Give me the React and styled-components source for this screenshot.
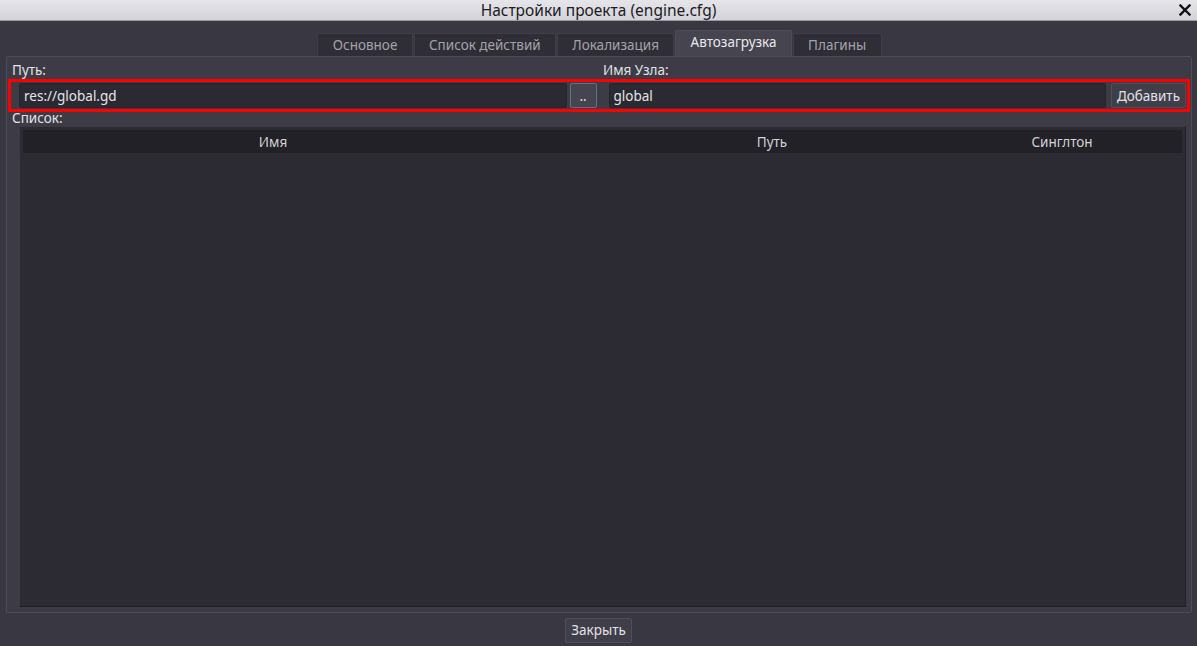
import React from 'react';
import styled, { createGlobalStyle } from 'styled-components';

const GlobalStyle = createGlobalStyle`
	html, body {
		margin: 0;
		padding: 0;
		background: #35343d;
	}
	body {
		font-family: 'Noto Sans', 'Open Sans', sans-serif;
		font-size: 13.5px;
		color: #dcdce0;
	}
`;

const tabs = ['Основное', 'Список действий', 'Локализация', 'Автозагрузка', 'Плагины'];

const columns = [
	{ title: 'Имя', width: '500px' },
	{ title: 'Путь', width: '498px' },
	{ title: 'Синглтон', width: '82px' },
];

const App = () => {
	return (
		<Window>
			<GlobalStyle />
			<TitleBar>
				<TitleText>Настройки проекта (engine.cfg)</TitleText>
				<CloseButton>
					<svg width="12" height="12" viewBox="0 0 12 12">
						<path d="M1.5 1.5 L10.5 10.5 M10.5 1.5 L1.5 10.5" stroke="#111" strokeWidth="2.4" strokeLinecap="square" />
					</svg>
				</CloseButton>
			</TitleBar>
			<Body>
				<TabBar>
					{tabs.map((t) => (
						<Tab key={t} active={t === 'Автозагрузка'}>
							{t}
						</Tab>
					))}
				</TabBar>
				<Panel>
					<LabelRow>
						<Label>Путь:</Label>
						<Label>Имя Узла:</Label>
					</LabelRow>
					<Highlight>
						<FieldGroup>
							<Input defaultValue="res://global.gd" />
							<Button focused narrow>..</Button>
						</FieldGroup>
						<FieldGroup wide>
							<Input defaultValue="global" />
							<Button>Добавить</Button>
						</FieldGroup>
					</Highlight>
					<Label tight>Список:</Label>
					<Tree>
						<TreeHeader>
							{columns.map((c) => (
								<HeaderCell key={c.title} style={{ width: c.width }}>
									{c.title}
								</HeaderCell>
							))}
						</TreeHeader>
					</Tree>
				</Panel>
				<Footer>
					<Button>Закрыть</Button>
				</Footer>
			</Body>
		</Window>
	);
};

export default App;

const Window = styled.div`
	width: 1197px;
	height: 646px;
	display: flex;
	flex-direction: column;
	overflow: hidden;
`;

const TitleBar = styled.div`
	height: 21px;
	flex: none;
	display: flex;
	align-items: center;
	justify-content: center;
	position: relative;
	background: linear-gradient(#e6e5ea, #d4d3da);
	border-bottom: 1px solid #9c9ba4;
	box-sizing: border-box;
`;

const TitleText = styled.span`
	font-size: 15.5px;
	color: #1c1c1f;
	line-height: 21px;
	margin-top: 1px;
`;

const CloseButton = styled.span`
	position: absolute;
	right: 6px;
	top: 4px;
	display: flex;
`;

const Body = styled.div`
	flex: 1;
	display: flex;
	flex-direction: column;
	padding: 0 5px;
	background: #393842;
`;

const TabBar = styled.div`
	height: 35px;
	display: flex;
	align-items: flex-end;
	justify-content: center;
	gap: 1px;
	flex: none;
	padding-left: 2px;
`;

const Tab = styled.div`
	height: ${({ active }) => (active ? '26px' : '23px')};
	box-sizing: border-box;
	padding: 0 14.3px;
	display: flex;
	align-items: center;
	font-size: 13.5px;
	color: ${({ active }) => (active ? '#e8e8ec' : '#a3a2ab')};
	background: ${({ active }) => (active ? '#45444f' : '#2f2e36')};
	border: 1px solid ${({ active }) => (active ? '#4c4b56' : '#3f3e48')};
	border-bottom: none;
	border-radius: 2px 2px 0 0;
	padding-bottom: ${({ active }) => (active ? '3px' : '0')};
`;

const Panel = styled.div`
	height: 557px;
	box-sizing: border-box;
	margin: 0 0 0 1px;
	border: 1px solid #4d4c58;
	border-radius: 2px;
	background: #3d3c46;
	display: flex;
	flex-direction: column;
	padding: 5px 1px 5px 1px;
`;

const LabelRow = styled.div`
	display: grid;
	grid-template-columns: 1fr 1fr;
`;

const Label = styled.div`
	font-size: 13.5px;
	color: #e2e2e6;
	line-height: 17px;
	height: ${({ tight }) => (tight ? '16px' : '17px')};
	margin-top: ${({ tight }) => (tight ? '-2px' : '0')};
	padding-left: 4px;
	position: relative;
`;

const Highlight = styled.div`
	border: 3px solid #ff0000;
	padding: 1px 1px 1px 8px;
	display: grid;
	grid-template-columns: 1fr 1fr;
	column-gap: 12px;
	box-sizing: border-box;
	height: 33px;
`;

const FieldGroup = styled.div`
	display: flex;
	gap: ${({ wide }) => (wide ? '5px' : '3px')};
	height: 25px;
`;

const Input = styled.input`
	flex: 1;
	min-width: 0;
	height: 25px;
	box-sizing: border-box;
	background: #2b2a32;
	border: 1px solid #26252c;
	border-radius: 2px;
	color: #e4e4e8;
	font-family: 'Noto Sans', 'Open Sans', sans-serif;
	font-size: 13.5px;
	padding: 0 4px;
	outline: none;
`;

const Button = styled.button`
	height: 25px;
	box-sizing: border-box;
	min-width: ${({ narrow }) => (narrow ? '27px' : 'auto')};
	padding: 0 ${({ narrow }) => (narrow ? '0' : '5px')};
	background: ${({ focused }) => (focused ? '#45444f' : '#3f3e49')};
	border: 1px solid ${({ focused }) => (focused ? '#5f6f88' : '#4f4e59')};
	border-radius: 2px;
	color: #e2e2e6;
	font-family: 'Noto Sans', 'Open Sans', sans-serif;
	font-size: 13.5px;
	cursor: pointer;
`;

const Tree = styled.div`
	flex: 1;
	margin: 0 4px 0 11px;
	background: #2c2b33;
	border: 1px solid #3c3b45;
	border-right-color: #222127;
	border-bottom-color: #1f1e24;
	padding: 3px;
`;

const TreeHeader = styled.div`
	display: flex;
	height: 23px;
	background: #222127;
	border-radius: 1px;
`;

const HeaderCell = styled.div`
	flex: none;
	display: flex;
	align-items: center;
	justify-content: center;
	font-size: 13.5px;
	color: #d2d2d6;
`;

const Footer = styled.div`
	flex: 1;
	display: flex;
	align-items: center;
	justify-content: center;
	padding-top: 1px;
`;
